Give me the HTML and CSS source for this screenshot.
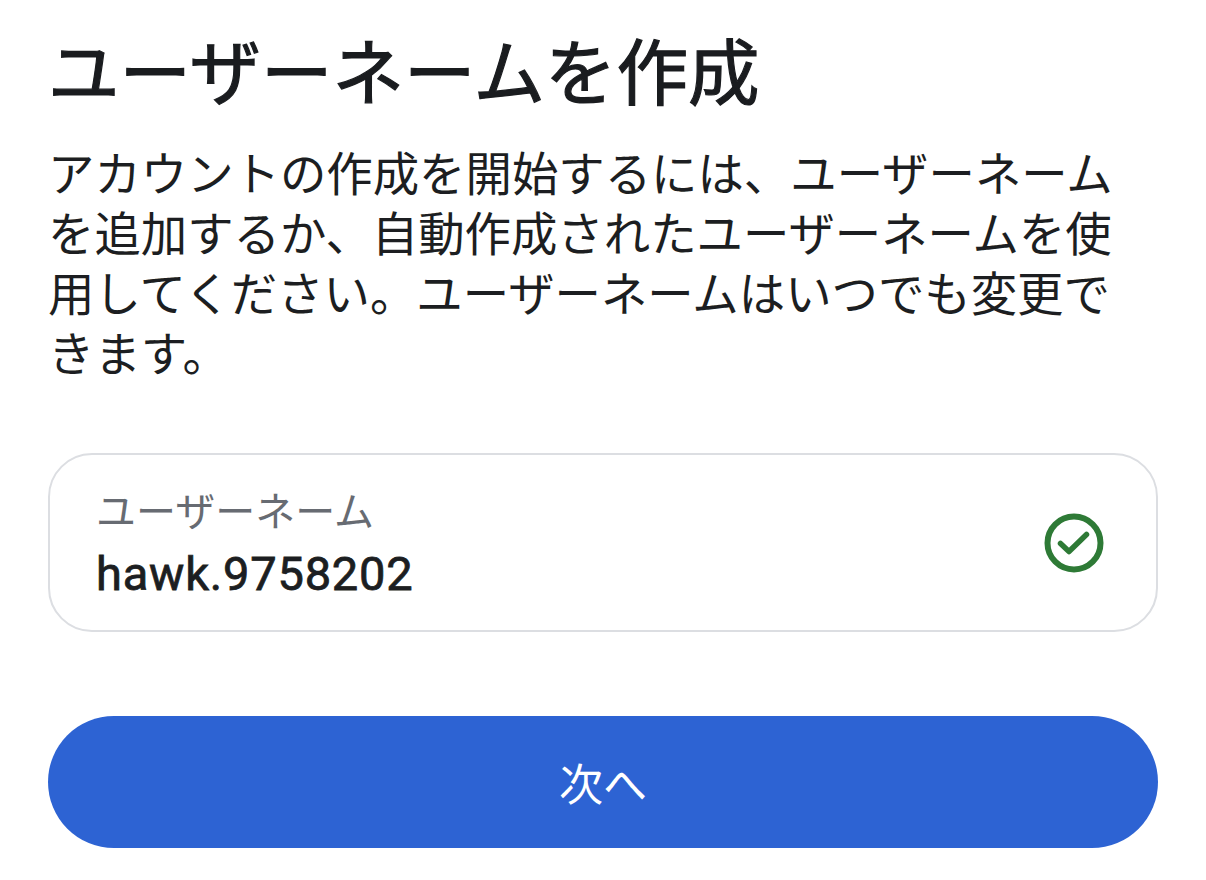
FILE: index.html
```html
<!DOCTYPE html>
<html lang="ja">
<head>
<meta charset="utf-8">
<title>ユーザーネームを作成</title>
<link rel="stylesheet" href="styles.css">
</head>
<body>
<main class="page">
  <h1 class="title">ユーザーネームを作成</h1>
  <p class="desc">アカウントの作成を開始するには、ユーザーネームを追加するか、自動作成されたユーザーネームを使用してください。ユーザーネームはいつでも変更できます。</p>
  <div class="field">
    <div class="field-text">
      <div class="label">ユーザーネーム</div>
      <div class="value">hawk.9758202</div>
    </div>
    <svg class="check" viewBox="0 0 60 60" width="60" height="60" aria-hidden="true">
      <circle cx="30" cy="30" r="26.5" fill="none" stroke="#2e7a36" stroke-width="6"/>
      <path d="M16.5 30.5 L25 38.5 L42.5 21.5" fill="none" stroke="#2e7a36" stroke-width="5.5" stroke-linecap="round" stroke-linejoin="round"/>
    </svg>
  </div>
  <button class="next" type="button">次へ</button>
</main>
</body>
</html>
```

FILE: styles.css
```css
html, body {
  margin: 0;
  padding: 0;
  background: #ffffff;
}

body {
  font-family: "Noto Sans CJK JP", "Noto Sans", sans-serif;
  color: #1c1e21;
}

.page {
  width: 1110px;
  padding: 26px 0 0 48px;
  display: flex;
  flex-direction: column;
}

.title {
  margin: 0;
  font-size: 71.5px;
  line-height: 84px;
  font-weight: 400;
  -webkit-text-stroke: 1.2px #1a1c1f;
  color: #1a1c1f;
}

.desc {
  margin: 31px 0 0 0;
  max-width: 1090px;
  font-size: 46.4px;
  line-height: 60px;
  font-weight: 400;
  color: #1c1e21;
}

.field {
  margin-top: 72px;
  box-sizing: border-box;
  width: 1110px;
  height: 179px;
  border: 2px solid #dcdee2;
  border-radius: 44px;
  padding: 28px 52px 28px 46px;
  display: flex;
  align-items: center;
  justify-content: space-between;
}

.field-text {
  display: flex;
  flex-direction: column;
  gap: 15px;
}

.label {
  font-size: 40px;
  line-height: 48px;
  color: #676b72;
}

.value {
  font-family: Roboto, "Noto Sans", sans-serif;
  font-size: 47px;
  line-height: 52px;
  font-weight: 400;
  -webkit-text-stroke: 0.8px #1c1e21;
  letter-spacing: 0.8px;
  color: #1c1e21;
}

.check {
  display: block;
  flex: none;
}

.next {
  margin-top: 84px;
  width: 1110px;
  height: 132px;
  border: none;
  border-radius: 66px;
  background: #2d63d3;
  color: #ffffff;
  font-family: "Noto Sans CJK JP", "Noto Sans", sans-serif;
  font-size: 44px;
  font-weight: 400;
  padding: 0;
  cursor: pointer;
}
```
